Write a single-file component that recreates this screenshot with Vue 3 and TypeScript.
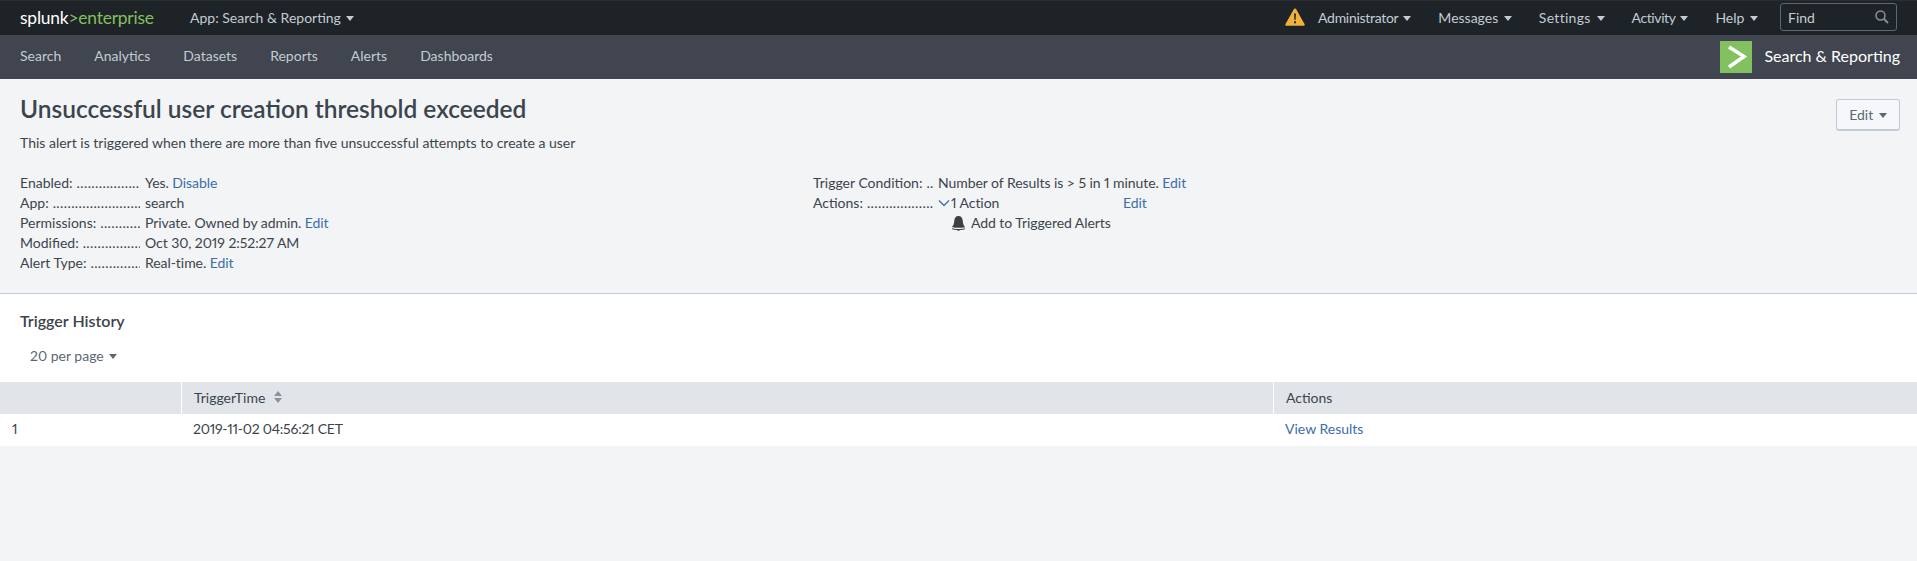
<script setup lang="ts">
const appNav = ['Search', 'Analytics', 'Datasets', 'Reports', 'Alerts', 'Dashboards']
const systemNav = ['Administrator', 'Messages', 'Settings', 'Activity', 'Help']
</script>

<template>
  <div class="page">
    <!-- Top bar -->
    <header class="topbar">
      <div class="logo">splunk<span class="logo-green">&gt;enterprise</span></div>
      <a class="app-menu">App: Search &amp; Reporting <i class="caret"></i></a>
      <div class="topbar-right">
        <svg class="warn" width="20" height="18" viewBox="0 0 20 18">
          <path d="M10 .5c.5 0 .9.3 1.2.8l8.300 14.600c.5.9 0 1.800-1 1.800H1.500c-1 0-1.500-.9-1-1.800L8.800 1.300c.3-.5.7-.8 1.200-.8z" fill="#f1b23c" />
          <path d="M9 5.500h2l-.4 6.500H9.400zM9 13.300h2v2H9z" fill="#2b2b2b" />
        </svg>
        <a v-for="item in systemNav" :key="item" class="sys-item">{{ item }} <i class="caret"></i></a>
        <div class="find">
          <span>Find</span>
          <svg width="14" height="14" viewBox="0 0 14 14" fill="none" stroke="#8b9097" stroke-width="1.500">
            <circle cx="5.500" cy="5.500" r="4.500" />
            <path d="M9 9l4 4" stroke-width="2" />
          </svg>
        </div>
      </div>
    </header>

    <!-- App bar -->
    <nav class="appbar">
      <a v-for="item in appNav" :key="item" class="app-link">{{ item }}</a>
      <div class="app-label">
        <div class="app-icon">
          <svg width="26" height="32" viewBox="0 0 26 32" fill="none" stroke="#fff" stroke-width="3.600">
            <path d="M6 6l15 9.500L6 26" />
          </svg>
        </div>
        <span class="app-name">Search &amp; Reporting</span>
      </div>
    </nav>

    <!-- Alert details -->
    <section class="details">
      <div class="title-row">
        <div>
          <h1>Unsuccessful user creation threshold exceeded</h1>
          <p class="desc">This alert is triggered when there are more than five unsuccessful attempts to create a user</p>
        </div>
        <button class="edit-btn">Edit <i class="caret dark"></i></button>
      </div>
      <div class="columns">
        <dl class="col-left">
          <div class="row"><dt>Enabled:</dt><dd>Yes. <a>Disable</a></dd></div>
          <div class="row"><dt>App:</dt><dd>search</dd></div>
          <div class="row"><dt>Permissions:</dt><dd>Private. Owned by admin. <a>Edit</a></dd></div>
          <div class="row"><dt>Modified:</dt><dd>Oct 30, 2019 2:52:27 AM</dd></div>
          <div class="row"><dt>Alert Type:</dt><dd>Real-time. <a>Edit</a></dd></div>
        </dl>
        <dl class="col-right">
          <div class="row"><dt>Trigger Condition:</dt><dd>Number of Results is &gt; 5 in 1 minute. <a>Edit</a></dd></div>
          <div class="row">
            <dt>Actions:</dt>
            <dd class="actions-cell">
              <svg width="12" height="8" viewBox="0 0 12 8" fill="none" stroke="#3c6eaa" stroke-width="1.300">
                <path d="M1 1.500l5 5 5-5" />
              </svg>
              <span class="action-count">1 Action</span>
              <a>Edit</a>
            </dd>
          </div>
          <div class="row">
            <dt class="blank"></dt>
            <dd class="action-item">
              <svg width="15" height="15" viewBox="0 0 15 15">
                <path d="M7.500 0C5 0 3.500 2 3.300 4.500c-.2 3-.8 4.700-2.300 6.500 0 1 13 1 13 0-1.500-1.800-2.100-3.500-2.300-6.500C11.500 2 10 0 7.500 0z" fill="#3c3f46" />
                <path d="M1 12.300c1.500 1 11.500 1 13 0v.8c-1.500 1.300-11.500 1.300-13 0z" fill="#3c3f46" />
                <path d="M6 13.800h3c-.2 1.300-2.800 1.300-3 0z" fill="#3c3f46" />
              </svg>
              Add to Triggered Alerts
            </dd>
          </div>
        </dl>
      </div>
    </section>

    <!-- Trigger history -->
    <section class="history">
      <h2>Trigger History</h2>
      <a class="per-page">20 per page <i class="caret grey"></i></a>
      <div class="table">
        <div class="th">&nbsp;</div>
        <div class="th pad">
          TriggerTime
          <svg class="sort" width="8" height="12" viewBox="0 0 8 12" fill="#8d929a">
            <path d="M4 0l4 5H0zM0 7h8l-4 5z" />
          </svg>
        </div>
        <div class="th pad">Actions</div>
        <div class="td num">1</div>
        <div class="td time">2019-11-02 04:56:21 CET</div>
        <div class="td link"><a>View Results</a></div>
      </div>
    </section>
  </div>
</template>

<style>
html,
body {
  margin: 0;
  background: #f2f4f5;
}
</style>

<style scoped>
.page {
  min-height: 561px;
  background: #f2f4f5;
  font-family: Lato, "Open Sans", sans-serif;
  font-size: 14px;
  font-variant-numeric: proportional-nums;
  color: #3c444d;
}

.caret {
  display: inline-block;
  width: 0;
  height: 0;
  margin-left: 2px;
  vertical-align: 2px;
  border-left: 4px solid transparent;
  border-right: 4px solid transparent;
  border-top: 5px solid #c3cbd4;
}

.caret.dark,
.caret.grey {
  border-top-color: #5c6773;
}

.topbar {
  display: flex;
  align-items: center;
  height: 35px;
  box-sizing: border-box;
  border-top: 1px solid #2a2c2e;
  padding-bottom: 2px;
  background: #1e2327;
  color: #c3cbd4;
}

.logo {
  width: 190px;
  padding-left: 20px;
  box-sizing: border-box;
  font-size: 17.400px;
  color: #fff;
  letter-spacing: -0.200px;
}

.logo-green {
  color: #82c060;
}

.topbar-right {
  display: flex;
  align-items: center;
  margin-left: auto;
  padding-right: 20px;
}

.warn {
  margin-right: 13px;
}

.sys-item {
  margin-right: 27px;
}

/* the nav labels run a touch wider or narrower than the original face */
.sys-item:nth-of-type(1) {
  letter-spacing: -0.300px;
}

.sys-item:nth-of-type(3) {
  letter-spacing: 0.300px;
}

.sys-item:nth-of-type(4) {
  letter-spacing: -0.400px;
}

.sys-item:last-of-type {
  margin-right: 22px;
}

.find {
  display: flex;
  align-items: center;
  justify-content: space-between;
  box-sizing: border-box;
  width: 117px;
  height: 28px;
  padding: 0 7px;
  border: 1px solid #5c6773;
  border-radius: 3px;
  color: #c3cbd4;
}

.appbar {
  display: flex;
  align-items: center;
  gap: 33px;
  height: 44px;
  padding: 0 17px 0 20px;
  background: #40454f;
  color: #c3cbd4;
}

.app-link,
.app-name {
  margin-bottom: 3px;
}

.app-label {
  display: flex;
  align-items: center;
  gap: 12px;
  margin-left: auto;
  color: #fff;
  font-size: 16px;
}

.app-icon {
  display: flex;
  align-items: center;
  justify-content: center;
  width: 32px;
  height: 32px;
  background: #82c060;
}

.details {
  height: 215px;
  box-sizing: border-box;
  border-bottom: 1px solid #c3cbd4;
  padding: 15px 17px 0 20px;
}

.title-row {
  display: flex;
  justify-content: space-between;
  align-items: flex-start;
}

h1 {
  margin: 0;
  font-size: 24.500px;
  line-height: 30px;
  font-weight: 600;
  color: #3c444d;
}

.desc {
  margin: 9px 0 0;
  line-height: 20px;
}

.edit-btn {
  box-sizing: border-box;
  width: 64px;
  height: 32px;
  margin-top: 5px;
  border: 1px solid #c3cbd4;
  border-bottom-width: 2px;
  border-radius: 3px;
  background: #f5f7fa;
  font: inherit;
  color: #5c6773;
}

.columns {
  display: flex;
  margin-top: 20px;
}

.col-left {
  width: 793px;
  margin: 0;
}

.col-right {
  margin: 0;
}

.row {
  display: flex;
  height: 20px;
  line-height: 20px;
}

dt {
  overflow: hidden;
  width: 120px;
  white-space: nowrap;
}

dt::after {
  content: " .....................................................";
  letter-spacing: 0.400px;
}

dt.blank::after {
  content: "";
}

dd {
  margin: 0 0 0 5px;
  white-space: nowrap;
  letter-spacing: -0.060px;
}

a {
  color: #3c6eaa;
  cursor: pointer;
}

.topbar a,
.appbar a {
  color: inherit;
}

.actions-cell {
  display: flex;
  align-items: center;
}

.action-count {
  width: 172px;
  margin-left: 1px;
}

.action-item {
  display: flex;
  align-items: center;
  gap: 5px;
  padding-left: 13px;
}

.history {
  padding-top: 17px;
  background: #fff;
}

h2 {
  margin: 0 0 0 20px;
  font-size: 16px;
  line-height: 20px;
  font-weight: 600;
  color: #3c444d;
}

.per-page {
  display: block;
  margin: 15px 0 0 30px;
  line-height: 20px;
  color: #5c6773;
}

.table {
  display: grid;
  grid-template-columns: 181px 1092px 1fr;
  margin-top: 16px;
}

.th {
  display: flex;
  align-items: center;
  height: 32px;
  box-sizing: border-box;
  border-left: 1px solid #fff;
  padding-bottom: 2px;
  background: #e1e4e9;
}

.th:first-child {
  border-left: 0;
}

.th.pad {
  padding-left: 12px;
}

.sort {
  margin-left: 9px;
}

.td {
  height: 32px;
  line-height: 30px;
  padding-left: 12px;
}

.time {
  letter-spacing: -0.250px;
}
</style>
